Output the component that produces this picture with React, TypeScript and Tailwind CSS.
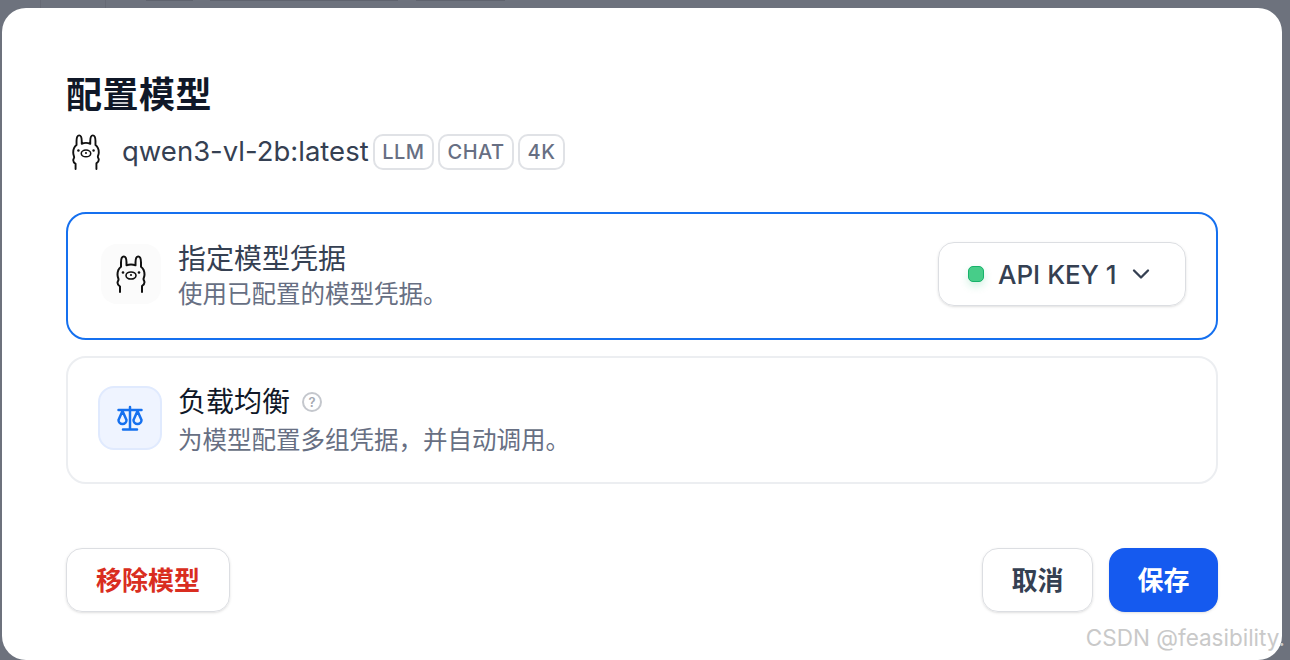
import { ChevronDown } from 'lucide-react';

const FONT = "font-['Inter','Noto_Sans_CJK_SC',sans-serif]";

const Llama = ({ className }: { className?: string }) => (
  <svg viewBox="0 0 30 38" className={className} fill="none" stroke="#111" strokeWidth="2" strokeLinecap="round" strokeLinejoin="round">
    <path d="M4 37v-5.500c-1.500-1-2.500-2.200-2.500-3.800 0-1.400 1-2 1-3.200S1.500 22 1.500 19.500c0-3.500 1.500-6.300 3.500-7.800V7.500C5 4 6.200 1.500 7.800 1.500S10.500 4 10.500 7.500v2.800c1.400-.6 3-.9 4.500-.9s3.100.3 4.500.9V7.500c0-3.500 1.100-6 2.700-6S25 4 25 7.500v4.200c2 1.500 3.500 4.300 3.500 7.800 0 2.500-1 3.300-1 4.500s1 1.800 1 3.200c0 1.600-1 2.800-2.500 3.800V37" />
    <ellipse cx="15" cy="20.500" rx="5" ry="3.500" strokeWidth="1.600" />
    <circle cx="15" cy="20" r="1.100" fill="#111" stroke="none" />
    <circle cx="7" cy="17.500" r="1.300" fill="#111" stroke="none" />
    <circle cx="23" cy="17.500" r="1.300" fill="#111" stroke="none" />
  </svg>
);

const Scale = () => (
  <svg viewBox="0 0 28 27" className="w-[28px] h-[27px]" fill="none" stroke="#1570ef" strokeWidth="2.500" strokeLinecap="round" strokeLinejoin="round">
    <path d="M14 2v22M7 24.500h14M2.500 5h23" />
    <path d="M6.500 6l-4 9a4 4 0 0 0 8 0zM21.500 6l-4 9a4 4 0 0 0 8 0z" />
  </svg>
);

const Tag = ({ label }: { label: string }) => (
  <span className="h-[36px] px-[7.5px] flex items-center rounded-[10px] border-2 border-[#e0e2e6] text-[20px] font-medium text-[#676f83] tracking-[0.5px]">
    {label}
  </span>
);

export default function App() {
  return (
    <div className={`h-[660px] overflow-hidden bg-[#6d727d] ${FONT}`}>
      <div className="h-[8px] flex items-start">
        <div className="w-[41px] h-[8px] border-r border-[#666a75]" />
        <div className="w-[65px] h-[8px] border-r border-[#666a75]" />
        <div className="ml-[40px] w-[47px] h-[1px] bg-[#5f636e]" />
        <div className="ml-[17px] w-[188px] h-[1px] bg-[#5f636e]" />
        <div className="ml-[18px] w-[89px] h-[1px] bg-[#5f636e]" />
      </div>
      <div className="relative ml-[2px] w-[1280px] h-[652px] bg-white rounded-[24px] px-[64px] pt-[63px]">
        <h1 className="text-[36px] leading-[48px] font-bold text-[#101828] tracking-[0.5px]">配置模型</h1>
        <div className="flex items-center mt-[15px] h-[36px]">
          <Llama className="ml-[5px] w-[30px] h-[36px] mr-[21px]" />
          <span className="text-[27.500px] text-[#354052] mr-[4px]">qwen3-vl-2b:latest</span>
          <div className="flex gap-[4px]">
            <Tag label="LLM" />
            <Tag label="CHAT" />
            <Tag label="4K" />
          </div>
        </div>

        <div className="mt-[42px] h-[128px] rounded-[20px] border-2 border-[#1570ef] flex items-center justify-between pl-[33px] pr-[30px]">
          <div className="flex items-center gap-[17px]">
            <div className="mb-[4px] w-[60px] h-[60px] rounded-[16px] bg-[#fbfbfb] flex items-center justify-center">
              <Llama className="w-[30px] h-[38px]" />
            </div>
            <div>
              <div className="text-[28px] leading-[36px] text-[#354052]">指定模型凭据</div>
              <div className="text-[24.500px] leading-[34px] text-[#676f83]">使用已配置的模型凭据。</div>
            </div>
          </div>
          <div className="mb-[4px] w-[248px] h-[64px] rounded-[16px] border border-[#dcdee2] shadow-sm flex items-center pl-[29px]">
            <span className="w-[16px] h-[16px] rounded-[5px] bg-[#47cd89] border border-[#17b26a] shadow-[0_4px_8px_rgba(23,178,106,0.2)]" />
            <span className="ml-[14px] text-[26px] font-medium text-[#354052]">API KEY 1</span>
            <ChevronDown className="ml-[10px] text-[#354052]" size={28} strokeWidth={2} />
          </div>
        </div>

        <div className="mt-[16px] h-[128px] rounded-[20px] border-2 border-[#eceef1] flex items-center pl-[30px] gap-[16px]">
          <div className="mb-[4px] w-[64px] h-[64px] rounded-[16px] bg-[#eff4ff] border-2 border-[#e0eafe] flex items-center justify-center">
            <Scale />
          </div>
          <div>
            <div className="flex items-center gap-[12px] text-[28px] leading-[36px] text-[#101828]">
              负载均衡
              <span className="w-[20px] h-[20px] rounded-full border-2 border-[#c4c7cd] text-[13px] leading-none font-semibold text-[#a5a9b1] flex items-center justify-center">?</span>
            </div>
            <div className="text-[24.500px] leading-[32px] text-[#676f83] mt-[4px]">为模型配置多组凭据，并自动调用。</div>
          </div>
        </div>

        <div className="mt-[64px] flex items-center justify-between">
          <button className="w-[164px] h-[64px] rounded-[16px] border border-[#dcdee2] shadow-sm text-[26px] font-semibold text-[#d92d20]">移除模型</button>
          <div className="flex gap-[16px]">
            <button className="w-[111px] h-[64px] rounded-[16px] border border-[#dcdee2] shadow-sm text-[26px] font-semibold text-[#354052]">取消</button>
            <button className="w-[109px] h-[64px] rounded-[16px] bg-[#155aef] shadow-sm text-[26px] font-semibold text-white">保存</button>
          </div>
        </div>

        <span className="absolute right-[-3px] top-[616px] text-[22.500px] leading-[28px] text-[#c9c9c9]">CSDN @feasibility.</span>
      </div>
    </div>
  );
}
